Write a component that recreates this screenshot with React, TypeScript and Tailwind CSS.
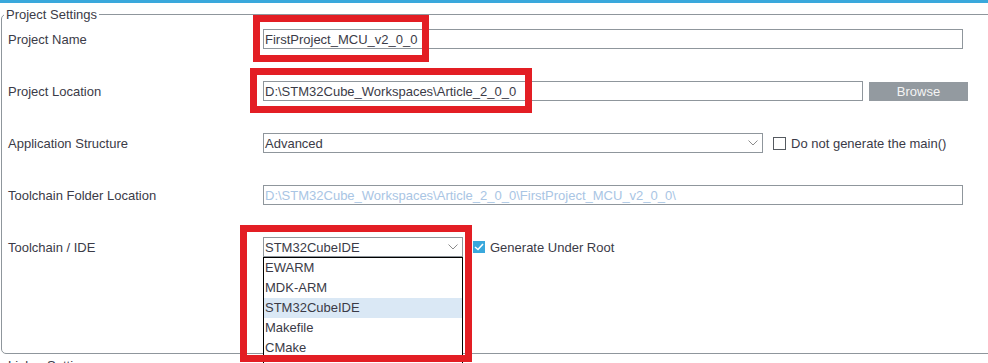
import type {ReactNode} from 'react';

type RowProperties = {
	label: string;
	children: ReactNode;
};

const toolchains = ['EWARM', 'MDK-ARM', 'STM32CubeIDE', 'Makefile', 'CMake'];

const Chevron = () => (
	<svg width="10" height="6" viewBox="0 0 10 6" className="shrink-0">
		<path d="M0.5 0.5 L5 5 L9.5 0.5" fill="none" stroke="#8c8c8c" strokeWidth="1"/>
	</svg>
);

const Row = ({label, children}: RowProperties) => (
	<div className="flex h-[20px] items-center">
		<div className="w-[255px] shrink-0">{label}</div>
		{children}
	</div>
);

const App = () => (
	<div className="relative h-[363px] w-[988px] overflow-hidden bg-white text-[13px] leading-[15px] text-[#3b3b47] [font-family:'Liberation_Sans',Arial,sans-serif]">
		<div className="h-[3px] bg-[#3aa8dc]"/>
		<fieldset className="mt-[4px] ml-[1px] w-[1100px] rounded-l-[5px] border border-[#8f969c] px-[6px] pt-[7px] pb-[96px]">
			<legend className="ml-[-4px] px-[2px]">Project Settings</legend>
			<div className="flex flex-col gap-[32px]">
				<Row label="Project Name">
					<div className="flex h-[20px] w-[700px] items-center border border-[#8f969c] px-[1px]">FirstProject_MCU_v2_0_0</div>
				</Row>
				<Row label="Project Location">
					<div className="flex h-[20px] w-[600px] items-center border border-[#8f969c] px-[1px]">D:\STM32Cube_Workspaces\Article_2_0_0</div>
					<button type="button" className="ml-[6px] h-[19px] w-[99px] bg-[#939aa0] text-[#f4f4f4]">Browse</button>
				</Row>
				<Row label="Application Structure">
					<div className="flex h-[20px] w-[500px] items-center justify-between border border-[#8f969c] pr-[4px] pl-[1px]">
						<span>Advanced</span>
						<Chevron/>
					</div>
					<span className="ml-[10px] h-[13px] w-[13px] border border-[#555a60]"/>
					<span className="ml-[5px]">Do not generate the main()</span>
				</Row>
				<Row label="Toolchain Folder Location">
					<div className="flex h-[20px] w-[700px] items-center border border-[#8f969c] px-[1px] text-[#a9c5e4]">D:\STM32Cube_Workspaces\Article_2_0_0\FirstProject_MCU_v2_0_0\</div>
				</Row>
				<Row label="Toolchain / IDE">
					<div className="relative w-[200px]">
						<div className="flex h-[20px] items-center justify-between border border-[#8f969c] pr-[4px] pl-[1px]">
							<span>STM32CubeIDE</span>
							<Chevron/>
						</div>
						<ul className="absolute top-[20px] left-0 w-[200px] border border-black bg-white pb-[20px]">
							{toolchains.map(item => (
								<li key={item} className={item === 'STM32CubeIDE' ? 'h-[20px] bg-[#dae8f5] pl-[1px] leading-[20px]' : 'h-[20px] pl-[1px] leading-[20px]'}>{item}</li>
							))}
						</ul>
					</div>
					<span className="ml-[10px] flex h-[12px] w-[12px] items-center justify-center bg-[#3aa8dc]">
						<svg width="10" height="8" viewBox="0 0 10 8">
							<path d="M1 4 L4 6.5 L9 1" fill="none" stroke="white" strokeWidth="1.6"/>
						</svg>
					</span>
					<span className="ml-[5px]">Generate Under Root</span>
				</Row>
			</div>
		</fieldset>
		<div className="mt-[4px] pl-[8px]">Linker Settings</div>

		<div className="absolute top-[15px] left-[253px] h-[47px] w-[176px] border-[7px] border-[#e31e24]"/>
		<div className="absolute top-[68px] left-[250px] h-[45px] w-[282px] border-[7px] border-[#e31e24]"/>
		<div className="absolute top-[225px] left-[240px] h-[137px] w-[232px] border-[7px] border-[#e31e24]"/>
	</div>
);

export default App;
